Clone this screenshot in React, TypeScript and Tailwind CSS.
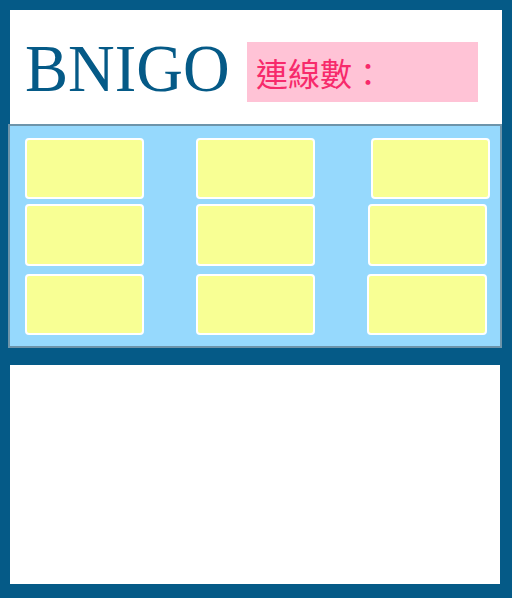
import React from "react";

function Card({ className = "" }: { className?: string }) {
  return (
    <div
      className={`w-[119px] h-[61px] shrink-0 rounded-[4px] border-2 border-white bg-[#f8ff94] ${className}`}
    />
  );
}

export default function App() {
  return (
    <div className="w-[512px] h-[598px] bg-[#055a87] pt-[10px] flex flex-col overflow-hidden">
      <div className="ml-[10px] w-[492px] h-[114px] shrink-0 bg-white flex items-start">
        <div className="w-[237px] shrink-0 pl-[15px] mt-[24px]">
          <div
            className="origin-left scale-x-[0.95] text-[68px] leading-none text-[#055a87] tracking-[0px] whitespace-nowrap"
            style={{ fontFamily: '"Liberation Serif", "Times New Roman", serif' }}
          >
            BNIGO
          </div>
        </div>
        <div
          className="mt-[32px] w-[231px] h-[60px] shrink-0 bg-[#ffc3d6] flex items-center pl-[9px] text-[32px] leading-none text-[#f72a6b]"
          style={{ fontFamily: '"Noto Sans CJK TC", "Noto Sans CJK SC", sans-serif' }}
        >
          連線數：
        </div>
      </div>
      <div className="ml-[8px] w-[494px] h-[224px] shrink-0 border-2 border-[#6d94aa] bg-[#96d9fd] flex flex-col pt-[12px] pl-[15px]">
        <div className="flex">
          <Card />
          <Card className="ml-[52px]" />
          <Card className="ml-[56px] w-[118px]" />
        </div>
        <div className="flex mt-[5px]">
          <Card className="h-[62px]" />
          <Card className="ml-[52px] h-[62px]" />
          <Card className="ml-[53px] w-[118px] h-[62px]" />
        </div>
        <div className="flex mt-[8px]">
          <Card />
          <Card className="ml-[52px]" />
          <Card className="ml-[52px] w-[120px]" />
        </div>
      </div>
      <div className="ml-[10px] mt-[17px] w-[490px] h-[219px] shrink-0 bg-white" />
    </div>
  );
}
